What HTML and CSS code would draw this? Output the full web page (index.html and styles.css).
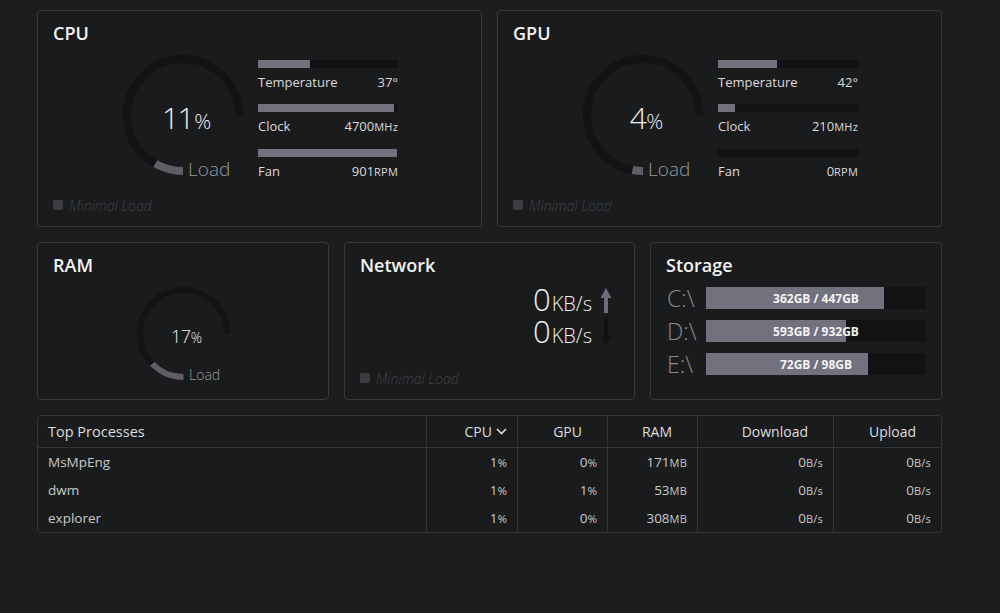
FILE: index.html
```html
<!DOCTYPE html>
<html lang="en">
<head>
<meta charset="utf-8">
<title>System Monitor</title>
<link rel="stylesheet" href="styles.css">
</head>
<body>
<main class="dash">
  <section class="row row-top">
    <div class="card card-load">
      <h2 class="card-title">CPU</h2>
      <div class="load-body">
        <div class="gauge gauge-lg">
          <svg class="gauge-svg" viewBox="0 0 120 120" width="120" height="120">
            <circle class="g-track" cx="60" cy="60" r="56" stroke-dasharray="263.89 400"/>
            <circle class="g-fill" cx="60" cy="60" r="56" stroke-dasharray="29.03 400"/>
          </svg>
          <div class="gauge-value"><span class="g-num">11</span><span class="g-pct">%</span></div>
          <div class="gauge-label">Load</div>
        </div>
        <div class="stats">
          <div class="stat">
            <div class="bar"><div class="bar-fill" style="width:37%"></div></div>
            <div class="stat-row"><span>Temperature</span><span>37°</span></div>
          </div>
          <div class="stat">
            <div class="bar"><div class="bar-fill" style="width:97%"></div></div>
            <div class="stat-row"><span>Clock</span><span>4700<small class="unit">MHz</small></span></div>
          </div>
          <div class="stat">
            <div class="bar"><div class="bar-fill" style="width:99.5%"></div></div>
            <div class="stat-row"><span>Fan</span><span>901<small class="unit">RPM</small></span></div>
          </div>
        </div>
      </div>
      <div class="status"><span class="status-dot"></span>Minimal Load</div>
    </div>

    <div class="card card-load">
      <h2 class="card-title">GPU</h2>
      <div class="load-body">
        <div class="gauge gauge-lg">
          <svg class="gauge-svg" viewBox="0 0 120 120" width="120" height="120">
            <circle class="g-track" cx="60" cy="60" r="56" stroke-dasharray="263.89 400"/>
            <circle class="g-fill" cx="60" cy="60" r="56" stroke-dasharray="10.56 400"/>
          </svg>
          <div class="gauge-value"><span class="g-num">4</span><span class="g-pct">%</span></div>
          <div class="gauge-label">Load</div>
        </div>
        <div class="stats">
          <div class="stat">
            <div class="bar"><div class="bar-fill" style="width:42%"></div></div>
            <div class="stat-row"><span>Temperature</span><span>42°</span></div>
          </div>
          <div class="stat">
            <div class="bar"><div class="bar-fill" style="width:12%"></div></div>
            <div class="stat-row"><span>Clock</span><span>210<small class="unit">MHz</small></span></div>
          </div>
          <div class="stat">
            <div class="bar"><div class="bar-fill" style="width:0%"></div></div>
            <div class="stat-row"><span>Fan</span><span>0<small class="unit">RPM</small></span></div>
          </div>
        </div>
      </div>
      <div class="status"><span class="status-dot"></span>Minimal Load</div>
    </div>
  </section>

  <section class="row row-mid">
    <div class="card card-small">
      <h2 class="card-title">RAM</h2>
      <div class="ram-body">
        <div class="gauge gauge-sm">
          <svg class="gauge-svg" viewBox="0 0 93 93" width="93" height="93">
            <circle class="g-track g-thin" cx="46.5" cy="46.5" r="43.5" stroke-dasharray="205 400"/>
            <circle class="g-fill g-thin" cx="46.5" cy="46.5" r="43.5" stroke-dasharray="34.85 400"/>
          </svg>
          <div class="gauge-value"><span class="g-num">17</span><span class="g-pct">%</span></div>
          <div class="gauge-label">Load</div>
        </div>
      </div>
    </div>

    <div class="card card-small">
      <h2 class="card-title">Network</h2>
      <div class="net-body">
        <div class="net-values">
          <div class="net-line"><span class="net-num">0</span><span class="net-unit">KB/s</span></div>
          <div class="net-line"><span class="net-num">0</span><span class="net-unit">KB/s</span></div>
        </div>
        <svg class="net-arrows" viewBox="0 0 12 58" width="12" height="58">
          <path class="arrow-up" d="M6 0 L11.5 10 L8 10 L8 25 L4 25 L4 10 L0.5 10 Z"/>
          <path class="arrow-down" d="M4 30 L8 30 L8 47 L11.5 47 L6 57 L0.5 47 L4 47 Z"/>
        </svg>
      </div>
      <div class="status"><span class="status-dot"></span>Minimal Load</div>
    </div>

    <div class="card card-small">
      <h2 class="card-title">Storage</h2>
      <div class="drives">
        <div class="drive">
          <span class="drive-label">C:\</span>
          <div class="drive-bar"><div class="drive-fill" style="width:81%"></div><span class="drive-text">362GB / 447GB</span></div>
        </div>
        <div class="drive">
          <span class="drive-label">D:\</span>
          <div class="drive-bar"><div class="drive-fill" style="width:63.6%"></div><span class="drive-text">593GB / 932GB</span></div>
        </div>
        <div class="drive">
          <span class="drive-label">E:\</span>
          <div class="drive-bar"><div class="drive-fill" style="width:73.5%"></div><span class="drive-text">72GB / 98GB</span></div>
        </div>
      </div>
    </div>
  </section>

  <section class="procs">
    <div class="p-row p-head">
      <div class="p-cell p-name">Top Processes</div>
      <div class="p-cell p-sorted">CPU<svg class="chev" viewBox="0 0 11 7" width="11" height="7"><path d="M1 1 L5.5 5.5 L10 1"/></svg></div>
      <div class="p-cell">GPU</div>
      <div class="p-cell">RAM</div>
      <div class="p-cell">Download</div>
      <div class="p-cell">Upload</div>
    </div>
    <div class="p-row">
      <div class="p-cell p-name">MsMpEng</div>
      <div class="p-cell">1<small class="pu">%</small></div>
      <div class="p-cell">0<small class="pu">%</small></div>
      <div class="p-cell">171<small class="unit">MB</small></div>
      <div class="p-cell">0<small class="unit">B/s</small></div>
      <div class="p-cell">0<small class="unit">B/s</small></div>
    </div>
    <div class="p-row">
      <div class="p-cell p-name">dwm</div>
      <div class="p-cell">1<small class="pu">%</small></div>
      <div class="p-cell">1<small class="pu">%</small></div>
      <div class="p-cell">53<small class="unit">MB</small></div>
      <div class="p-cell">0<small class="unit">B/s</small></div>
      <div class="p-cell">0<small class="unit">B/s</small></div>
    </div>
    <div class="p-row">
      <div class="p-cell p-name">explorer</div>
      <div class="p-cell">1<small class="pu">%</small></div>
      <div class="p-cell">0<small class="pu">%</small></div>
      <div class="p-cell">308<small class="unit">MB</small></div>
      <div class="p-cell">0<small class="unit">B/s</small></div>
      <div class="p-cell">0<small class="unit">B/s</small></div>
    </div>
  </section>
</main>
</body>
</html>
```

FILE: styles.css
```css
* { box-sizing: border-box; }

html, body {
  margin: 0;
  background: #1c1d1f;
}

body {
  font-family: "Open Sans", "Noto Sans", "Liberation Sans", sans-serif;
  color: #dcdcdc;
  padding: 10px 0 0 37px;
}

.dash {
  width: 905px;
  display: flex;
  flex-direction: column;
  gap: 15px;
}

.row {
  display: grid;
  gap: 15px;
}

.row-top { grid-template-columns: 1fr 1fr; }
.row-mid { grid-template-columns: 292px 291px 292px; }

.card {
  background: #1a1b1d;
  border: 1px solid #38393c;
  border-radius: 4px;
  padding: 10px 15px 11px;
  display: flex;
  flex-direction: column;
}

.card-load { height: 217px; }
.card-small { height: 158px; }

.card-title {
  margin: 0;
  font-size: 18px;
  font-weight: 600;
  line-height: 24px;
  color: #f2f2f2;
}

/* load cards */
.load-body {
  margin-top: 10px;
  display: flex;
  justify-content: center;
  gap: 15px;
  padding-left: 2px;
}

.gauge { position: relative; flex: none; }
.gauge-lg { width: 120px; height: 120px; }
.gauge-sm { width: 93px; height: 93px; }

.gauge-svg { display: block; transform: rotate(90deg); }

.g-track, .g-fill {
  fill: none;
  stroke-width: 8;
}
.g-track { stroke: #121315; }
.g-fill { stroke: #5e5e66; }
.g-thin { stroke-width: 6; }

.gauge-value {
  position: absolute;
  left: 0;
  right: 0;
  text-align: center;
  color: #f0f0f0;
  font-weight: 300;
  white-space: nowrap;
}

.gauge-lg .gauge-value { top: 47px; padding-left: 7px; line-height: 32px; }
.gauge-lg .g-num { font-size: 30px; letter-spacing: -1.5px; }
.gauge-lg .g-pct { font-size: 21px; margin-left: 1px; }

.gauge-sm .gauge-value { top: 40px; padding-left: 6px; line-height: 18px; }
.gauge-sm .g-num { font-size: 18px; letter-spacing: -0.5px; }
.gauge-sm .g-pct { font-size: 14px; }

.gauge-label {
  position: absolute;
  color: #9a9a9c;
  font-weight: 300;
  white-space: nowrap;
}
.gauge-lg .gauge-label { left: 65px; top: 104px; font-size: 19px; line-height: 21px; }
.gauge-sm .gauge-label { left: 52px; top: 80px; font-size: 14px; line-height: 15px; }

.stats {
  width: 140px;
  padding-top: 5px;
  display: flex;
  flex-direction: column;
}

.stat { margin-bottom: 12px; }

.bar {
  height: 8px;
  background: #111214;
}
.bar-fill {
  height: 100%;
  background: #72717e;
}

.stat-row {
  margin-top: 4px;
  display: flex;
  justify-content: space-between;
  font-size: 13px;
  line-height: 20px;
  color: #dadada;
}

.unit {
  font-size: 11px;
  letter-spacing: 0.2px;
}

.status {
  margin-top: auto;
  display: flex;
  align-items: center;
  gap: 6px;
  height: 20px;
  font-size: 14px;
  font-style: italic;
  font-weight: 300;
  color: #414145;
}
.status-dot {
  width: 10px;
  height: 10px;
  border-radius: 2px;
  background: #3c3c41;
}

/* RAM */
.ram-body {
  margin-top: 10px;
  display: flex;
  justify-content: center;
  padding-left: 1px;
}

/* Network */
.net-body {
  margin-top: 6px;
  display: flex;
  justify-content: flex-end;
  align-items: flex-start;
  gap: 8px;
  padding-right: 7px;
}
.net-values {
  display: flex;
  flex-direction: column;
  align-items: flex-end;
}
.net-line {
  display: flex;
  align-items: baseline;
  height: 32px;
  line-height: 32px;
  color: #f0f0f0;
  white-space: nowrap;
}
.net-num { font-size: 31px; font-weight: 300; line-height: 32px; }
.net-unit { font-size: 20px; font-weight: 300; margin-left: 1px; line-height: 32px; }
.net-arrows { margin-top: 5px; }
.arrow-up { fill: #6e6d7a; }
.arrow-down { fill: #0f1012; }

/* Storage */
.drives {
  margin-top: 10px;
  display: flex;
  flex-direction: column;
  gap: 11px;
  padding-left: 1px;
}
.drive {
  display: flex;
  align-items: center;
  height: 22px;
}
.drive-label {
  width: 39px;
  flex: none;
  font-size: 23px;
  font-weight: 300;
  color: #8a8a8c;
  line-height: 22px;
}
.drive-bar {
  position: relative;
  flex: 1;
  height: 22px;
  background: #111214;
}
.drive-fill {
  height: 100%;
  background: #72717e;
}
.drive-text {
  position: absolute;
  inset: 0;
  display: flex;
  align-items: center;
  justify-content: center;
  font-size: 12px;
  font-weight: 700;
  color: #f4f4f4;
}

/* Processes table */
.procs {
  border: 1px solid #333437;
  border-radius: 4px;
  background: #1a1b1d;
}
.p-row {
  display: grid;
  grid-template-columns: 388px 91px 90px 90px 136px 108px;
  height: 28px;
}
.p-head {
  height: 32px;
  border-bottom: 1px solid #333437;
}
.p-cell {
  border-left: 1px solid #333437;
  display: flex;
  align-items: center;
  justify-content: flex-end;
  padding: 0 10px;
  font-size: 13.5px;
  color: #c9c9c9;
  white-space: nowrap;
}
.p-head .p-cell {
  font-size: 14px;
  color: #dedede;
  padding-right: 25px;
}
.p-head .p-sorted { padding-right: 10px; }
.p-cell.p-name {
  border-left: none;
  justify-content: flex-start;
}
.p-head .p-name { font-size: 14.5px; }

.chev {
  margin-left: 4px;
  fill: none;
  stroke: #dedede;
  stroke-width: 1.6;
}

.pu { font-size: 11.5px; }
```
